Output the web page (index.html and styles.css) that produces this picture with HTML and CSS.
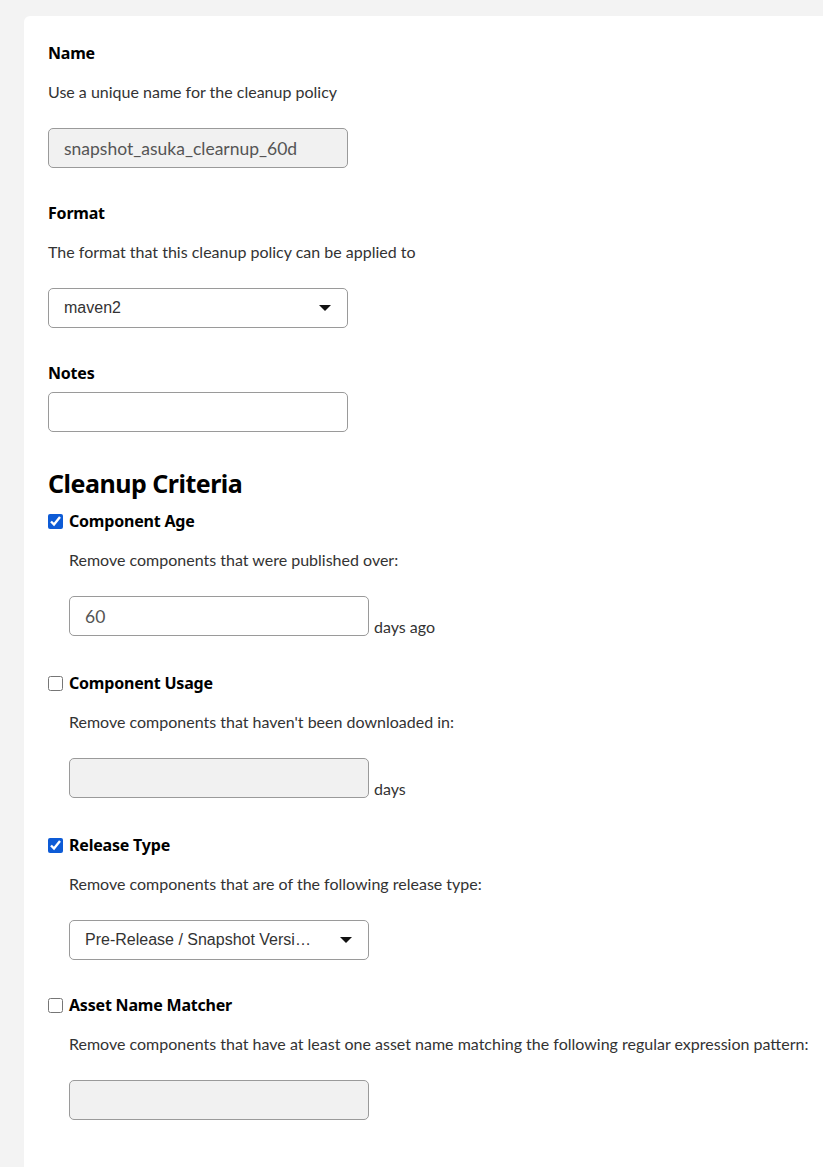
FILE: index.html
```html
<!DOCTYPE html>
<html>
<head>
<meta charset="utf-8">
<link rel="stylesheet" href="styles.css">
</head>
<body>
<div class="card">
  <div class="field">
    <div class="label">Name</div>
    <div class="desc">Use a unique name for the cleanup policy</div>
    <div class="input disabled"><span class="value-prox">snapshot_asuka_clearnup_60d</span></div>
  </div>
  <div class="field">
    <div class="label">Format</div>
    <div class="desc">The format that this cleanup policy can be applied to</div>
    <div class="select"><span class="sel-text">maven2</span><span class="caret"></span></div>
  </div>
  <div class="field">
    <div class="label label-tight">Notes</div>
    <div class="input"></div>
  </div>
  <h2 class="heading">Cleanup Criteria</h2>
  <div class="criterion">
    <label class="check-row"><input type="checkbox" class="cb" checked><span class="label">Component Age</span></label>
    <div class="sub">
      <div class="desc">Remove components that were published over:</div>
      <div class="row">
        <div class="input"><span class="value-prox">60</span></div>
        <span class="unit">days ago</span>
      </div>
    </div>
  </div>
  <div class="criterion">
    <label class="check-row"><input type="checkbox" class="cb"><span class="label">Component Usage</span></label>
    <div class="sub">
      <div class="desc">Remove components that haven't been downloaded in:</div>
      <div class="row">
        <div class="input disabled"></div>
        <span class="unit">days</span>
      </div>
    </div>
  </div>
  <div class="criterion criterion-select">
    <label class="check-row"><input type="checkbox" class="cb" checked><span class="label">Release Type</span></label>
    <div class="sub">
      <div class="desc">Remove components that are of the following release type:</div>
      <div class="select"><span class="sel-text sel-wide">Pre-Release / Snapshot Versions</span><span class="caret"></span></div>
    </div>
  </div>
  <div class="criterion">
    <label class="check-row"><input type="checkbox" class="cb"><span class="label">Asset Name Matcher</span></label>
    <div class="sub">
      <div class="desc">Remove components that have at least one asset name matching the following regular expression pattern:</div>
      <div class="input disabled"></div>
    </div>
  </div>
</div>
</body>
</html>
```

FILE: styles.css
```css
html, body {
  margin: 0;
  padding: 0;
  background: #f3f3f3;
}
body {
  padding: 16px 0 0 24px;
  font-family: "Lato", "Liberation Sans", sans-serif;
  color: #222;
}
.card {
  background: #fff;
  border-radius: 6px 0 0 0;
  padding: 27px 0 60px 24px;
  min-height: 1100px;
}
.field {
  margin-bottom: 35px;
}
.label {
  display: block;
  font-family: "Noto Sans", sans-serif;
  font-weight: 700;
  font-size: 16px;
  line-height: 20px;
  letter-spacing: -0.2px;
  color: #000;
}
.field > .label {
  margin-bottom: 19px;
}
.field > .label-tight {
  margin-bottom: 9px;
}
.desc {
  font-size: 16px;
  line-height: 20px;
  color: #333;
  margin-bottom: 26px;
  white-space: nowrap;
}
.input, .select {
  box-sizing: border-box;
  width: 300px;
  height: 40px;
  border: 1px solid #9a9a9a;
  border-radius: 5px;
  background: #fff;
  display: flex;
  align-items: center;
  padding: 0 15px;
}
.input.disabled {
  background: #f1f1f1;
}
.value-prox {
  font-family: "Lato", sans-serif;
  font-size: 17.5px;
  color: #555;
}
.select {
  justify-content: space-between;
}
.sel-text {
  font-family: "Liberation Sans", Arial, sans-serif;
  font-size: 16px;
  color: #333;
  white-space: nowrap;
  overflow: hidden;
  text-overflow: ellipsis;
}
.sel-wide {
  max-width: 232px;
}
.caret {
  flex: none;
  width: 0;
  height: 0;
  border-left: 6px solid transparent;
  border-right: 6px solid transparent;
  border-top: 6px solid #111;
  margin-right: 1px;
}
.heading {
  font-family: "Noto Sans", sans-serif;
  font-weight: 700;
  font-size: 25px;
  letter-spacing: -0.5px;
  line-height: 32px;
  margin: 0 0 12px 0;
  color: #000;
}
.criterion {
  margin-bottom: 37px;
}
.criterion-select {
  margin-bottom: 35px;
}
.check-row {
  display: flex;
  align-items: center;
  height: 20px;
  margin-bottom: 19px;
}
.cb {
  width: 15px;
  height: 15px;
  margin: 0 6px 0 0;
  accent-color: #0d5bd6;
}
.sub {
  padding-left: 21px;
}
.row {
  display: flex;
  align-items: flex-end;
}
.unit {
  font-size: 16px;
  color: #333;
  margin-left: 5px;
  line-height: 18px;
}
```
